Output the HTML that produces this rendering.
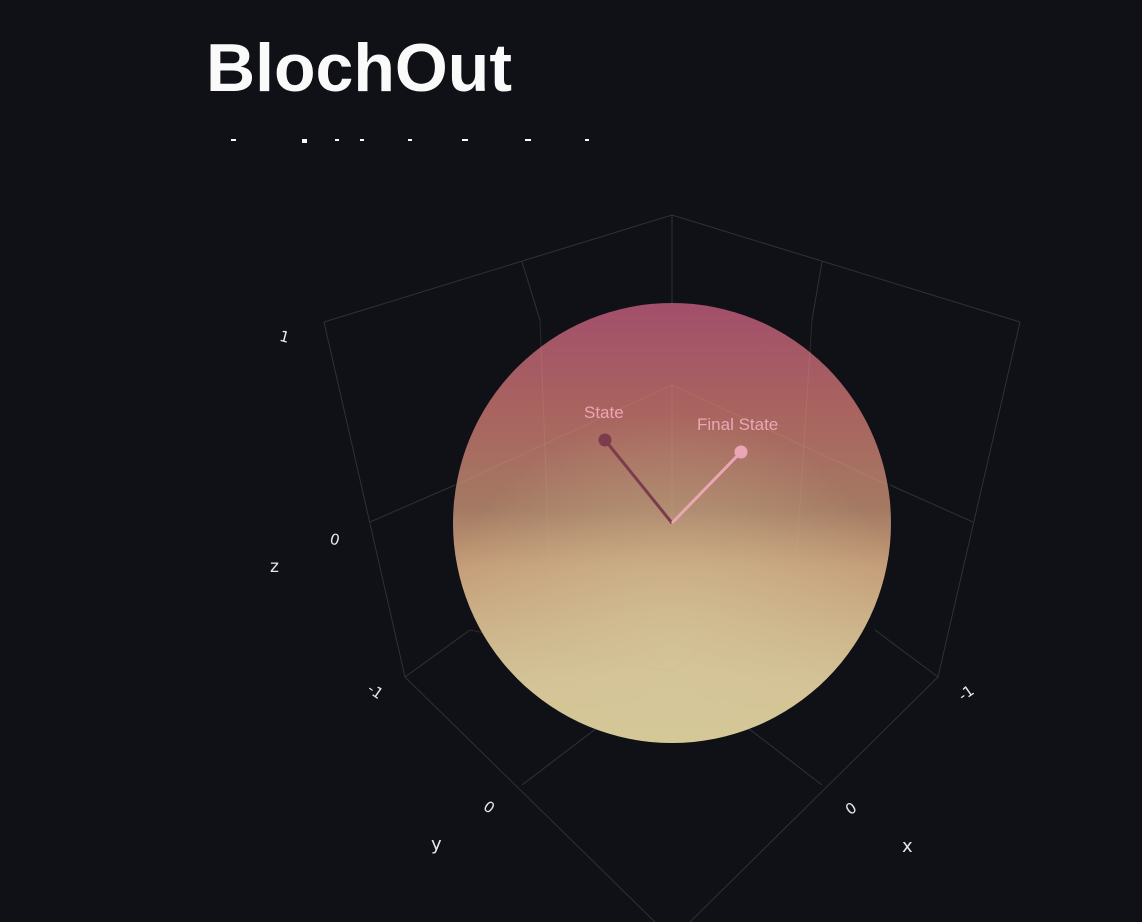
<!DOCTYPE html>
<html><head><meta charset="utf-8"><style>
html,body{margin:0;padding:0;background:#0f1116;width:1142px;height:922px;overflow:hidden}
h1{position:absolute;left:206px;top:28px;margin:0;font:bold 68px/80px "Liberation Sans",sans-serif;color:#fafafa;letter-spacing:0}
svg{position:absolute;left:0;top:0}
</style></head><body>
<h1>BlochOut</h1>
<svg width="1142" height="922" viewBox="0 0 1142 922">
<defs>
<linearGradient id="g" x1="0" y1="0" x2="0" y2="1">
<stop offset="0" stop-color="#a24f6b"/>
<stop offset="0.25" stop-color="#a9645f"/>
<stop offset="0.47" stop-color="#a47a63"/>
<stop offset="0.6" stop-color="#c49d78"/>
<stop offset="0.85" stop-color="#d2c096"/>
<stop offset="1" stop-color="#d4c795"/>
</linearGradient>
<radialGradient id="r" cx="0.5" cy="0.8" r="0.55">
<stop offset="0" stop-color="#d6c99a" stop-opacity="0.6"/>
<stop offset="1" stop-color="#d6c99a" stop-opacity="0"/>
</radialGradient>
</defs>
<g fill="#fafafa">
<rect x="231" y="139" width="5" height="2"/><rect x="302" y="139" width="5" height="4"/>
<rect x="335" y="139" width="4" height="2"/><rect x="360" y="139" width="4" height="2"/>
<rect x="408" y="139" width="4" height="2"/><rect x="462" y="139" width="6" height="2"/>
<rect x="525" y="139" width="6" height="2"/><rect x="585" y="139" width="4" height="2"/>
</g>
<g stroke="#2e3138" stroke-width="1" fill="none">
<polyline points="324,322 672,215 1020,322"/>
<line x1="672" y1="215" x2="672" y2="303"/>
<line x1="324" y1="322" x2="405" y2="677"/>
<line x1="1020" y1="322" x2="938" y2="677"/>
<line x1="522" y1="262" x2="540" y2="320"/>
<line x1="822" y1="262" x2="812" y2="320"/>
<line x1="370" y1="522" x2="455" y2="485"/>
<line x1="973" y1="522" x2="890" y2="485"/>
<line x1="405" y1="677" x2="655" y2="922"/>
<line x1="938" y1="677" x2="690" y2="922"/>
<line x1="522" y1="785" x2="610" y2="718"/>
<line x1="822" y1="785" x2="735" y2="718"/>
<line x1="405" y1="677" x2="470" y2="630"/>
<line x1="938" y1="677" x2="875" y2="630"/>
</g>
<ellipse cx="672" cy="523" rx="219" ry="220" fill="url(#g)"/>
<ellipse cx="672" cy="523" rx="219" ry="220" fill="url(#r)"/>
<g stroke="#e0b090" stroke-opacity="0.15" fill="none">
<polyline points="456,485 672,385 888,485"/>
<line x1="672" y1="385" x2="672" y2="523"/>
<line x1="540" y1="320" x2="550" y2="580"/>
<line x1="812" y1="320" x2="795" y2="580"/>
<polyline points="550,580 672,672 795,580"/>
<line x1="470" y1="630" x2="672" y2="672"/>
<line x1="610" y1="718" x2="672" y2="672"/>
<line x1="735" y1="718" x2="672" y2="672"/>
</g>
<line x1="672" y1="523" x2="605" y2="440" stroke="#7c3c4c" stroke-width="3"/>
<circle cx="605" cy="440" r="6.5" fill="#7c3c4c"/>
<line x1="672" y1="523" x2="741" y2="452" stroke="#eaa6b4" stroke-width="3"/>
<circle cx="741" cy="452" r="6.5" fill="#eaa6b4"/>
<g font-family="Liberation Sans,sans-serif" font-size="17" fill="#eaa6b4">
<text x="584" y="418">State</text>
<text x="697" y="430">Final State</text>
</g>
<g font-family="DejaVu Sans,sans-serif" font-size="15" fill="#e8e8e8">
<text x="280" y="342" transform="rotate(15 285 336)">1</text>
<text x="330" y="545" transform="rotate(15 336 540)">0</text>
<text x="270" y="572" font-size="17">z</text>
<text x="368" y="698" transform="rotate(35 378 692)">-1</text>
<text x="484" y="813" transform="rotate(35 490 808)">0</text>
<text x="431" y="850" font-size="18">y</text>
<text x="958" y="698" transform="rotate(-35 966 692)">-1</text>
<text x="846" y="813" transform="rotate(-35 852 808)">0</text>
<text x="902" y="852" font-size="18">x</text>
</g>
</svg>
</body></html>
